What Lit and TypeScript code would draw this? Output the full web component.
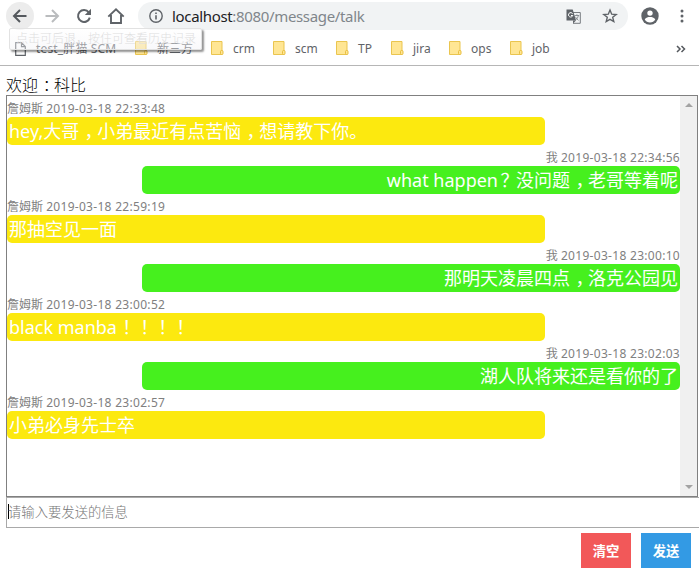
import { LitElement, html, css } from "lit";
import { customElement } from "lit/decorators.js";

interface Message {
  from: string;
  time: string;
  text: string;
  mine: boolean;
}

const messages: Message[] = [
  { from: "詹姆斯", time: "2019-03-18 22:33:48", text: "hey,大哥，小弟最近有点苦恼，想请教下你。", mine: false },
  { from: "我", time: "2019-03-18 22:34:56", text: "what happen？没问题，老哥等着呢", mine: true },
  { from: "詹姆斯", time: "2019-03-18 22:59:19", text: "那抽空见一面", mine: false },
  { from: "我", time: "2019-03-18 23:00:10", text: "那明天凌晨四点，洛克公园见", mine: true },
  { from: "詹姆斯", time: "2019-03-18 23:00:52", text: "black manba！！！！", mine: false },
  { from: "我", time: "2019-03-18 23:02:03", text: "湖人队将来还是看你的了", mine: true },
  { from: "詹姆斯", time: "2019-03-18 23:02:57", text: "小弟必身先士卒", mine: false },
];

const folders = ["新三方", "crm", "scm", "TP", "jira", "ops", "job"];

/* Full-width marks sit in the middle of their cell. */
const centred = (text: string) =>
  text.split(/([，：！？])/).map((part) => {
    if (part === "？") return html`<span class="mark ask">${part}</span>`;
    return /^[，：！]$/.test(part) ? html`<span class="mark">${part}</span>` : part;
  });

@customElement("browser-bar")
export class BrowserBar extends LitElement {
  static styles = css`
    :host {
      display: block;
      position: relative;
      height: 65px;
      background: #fff;
      border-bottom: 1px solid #b6b6b6;
      font-family: "Noto Sans", "Noto Sans CJK SC", sans-serif;
      color: #5f6368;
    }
    svg { display: block; flex: none; }
    .toolbar { display: flex; align-items: center; height: 32px; padding-left: 6px; }
    .btn { width: 28px; height: 28px; display: flex; align-items: center; justify-content: center; border-radius: 50%; margin-right: 4px; }
    .btn.on { background: #ececec; }
    .omni { display: flex; align-items: center; width: 490px; height: 28px; box-sizing: border-box; border-radius: 14px; background: #f1f3f4; padding: 0 10px; margin-left: 4px; }
    .url { flex: 1; margin-left: 8px; font-size: 15px; line-height: 28px; color: #80868b; white-space: nowrap; letter-spacing: -0.34px; }
    .url b { font-weight: 400; color: #202124; }
    .translate { margin-right: 21px; }
    .person { margin-left: 13px; }
    .dots { margin-left: 15px; }
    .marks { display: grid; grid-template-columns: 120px 76px 62px 63px 55px 58px 61px 1fr auto; align-items: center; height: 33px; padding: 0 13px 0 15px; font-size: 12px; line-height: 16px; }
    .mark { display: flex; align-items: center; white-space: nowrap; }
    .mark svg { margin-right: 9px; }
    .mark .page-icon { margin-right: 10px; }
    .wide { letter-spacing: 0.15px; }
    .tip {
      position: absolute;
      left: 9px;
      top: 28px;
      width: 193px;
      height: 22px;
      box-sizing: border-box;
      padding-left: 6px;
      border: 1px solid #e2e2e2;
      border-radius: 2px;
      background: linear-gradient(rgba(255, 255, 255, 0.5), rgba(240, 240, 245, 0.4));
      box-shadow: 2px 2px 2px rgba(0, 0, 0, 0.42);
      color: #dedede;
      font-size: 12px;
      font-weight: 300;
      line-height: 19px;
      white-space: nowrap;
    }
  `;

  folder() {
    return html`<svg width="13" height="15" viewBox="0 0 13 15">
      <path d="M.5.5h10.500v13H.5z" fill="#ffe694" stroke="#eac54f" />
      <rect x="9.500" y="9.500" width="2.500" height="4" rx="1" fill="#ffe694" stroke="#e8bd3d" />
    </svg>`;
  }

  render() {
    return html`
      <div class="toolbar">
        <div class="btn on">
          <svg width="16" height="16" viewBox="0 0 16 16"><path d="M14.5 8H2.5M8 2 2 8l6 6" fill="none" stroke="#55595e" stroke-width="2" /></svg>
        </div>
        <div class="btn">
          <svg width="16" height="16" viewBox="0 0 16 16"><path d="M1.5 8h12M8 2l6 6-6 6" fill="none" stroke="#babcbe" stroke-width="2" /></svg>
        </div>
        <div class="btn">
          <svg width="16" height="16" viewBox="0 0 16 16"><path d="M12.8 4.3A6 6 0 1 0 13.8 9.6" fill="none" stroke="#5f6368" stroke-width="2" /><path d="M15 .8V7H8.8z" fill="#5f6368" /></svg>
        </div>
        <div class="btn">
          <svg width="18" height="18" viewBox="0 0 18 18"><path d="M1.300 9.600 9 2.300l7.700 7.300M4 8v8h3.200M14 8v8h-3.200M6.500 16h5" fill="none" stroke="#5f6368" stroke-width="1.900" /></svg>
        </div>
        <div class="omni">
          <svg width="16" height="16" viewBox="0 0 16 16"><circle cx="8" cy="8" r="6.2" fill="none" stroke="#5f6368" stroke-width="1.4" /><path d="M7.2 7.2h1.6v4.2H7.2zM7.2 4.5h1.6v1.6H7.2z" fill="#5f6368" /></svg>
          <span class="url"><b>localhost</b>:8080/message/talk</span>
          <svg class="translate" width="15" height="15" viewBox="0 0 15 15">
            <path d="M6 3.5h8.3v10.8H7" fill="none" stroke="#777b80" />
            <path d="M.5.5h6.2l3.4 11H.5z" fill="#5f6368" />
            <path d="M10 11.5 7 14.5V11.5z" fill="#5f6368" />
            <path d="M6.6 4.7A2.2 2.2 0 1 0 6.8 6.5H5" fill="none" stroke="#fff" />
            <path d="M8.5 6.5h4.7M10.9 5.3v1.2M12.3 6.5c-.2 2-1.3 3.4-2.6 4.4M9.5 7.8c.6 1.4 1.6 2.7 3 3.6" fill="none" stroke="#777b80" stroke-width=".8" />
          </svg>
          <svg width="16" height="16" viewBox="0 0 16 16"><path d="m8 2 1.700 4.200 4.500.3-3.500 2.800 1.100 4.300L8 11.300l-3.800 2.300 1.100-4.300-3.500-2.800 4.500-.3z" fill="none" stroke="#5f6368" stroke-width="1.4" /></svg>
        </div>
        <svg class="person" width="18" height="18" viewBox="0 0 18 18"><circle cx="9" cy="9" r="8.7" fill="#5f6368" /><circle cx="9" cy="6.1" r="2.7" fill="#fff" /><path d="M3.7 12.6c1-2 3.5-2.6 5.3-2.6s4.3.6 5.3 2.6C13.2 14.4 11.2 15.5 9 15.5s-4.2-1.1-5.3-2.9z" fill="#fff" /></svg>
        <svg class="dots" width="16" height="16" viewBox="0 0 16 16" fill="#5f6368"><circle cx="8" cy="3" r="1.5" /><circle cx="8" cy="8" r="1.5" /><circle cx="8" cy="13" r="1.5" /></svg>
      </div>
      <div class="marks">
        <div class="mark wide">
          <svg class="page-icon" width="11" height="14" viewBox="0 0 11 14"><path d="M.7.7h5.800l3.800 3.800v8.800H.7zM6.500.7v4h4" fill="#fff" stroke="#5f6368" stroke-width="1.2" /></svg>test_胖猫 SCM
        </div>
        ${folders.map((name) => html`<div class="mark">${this.folder()}${name}</div>`)}
        <svg width="10" height="8" viewBox="0 0 10 8"><path d="m1 1 3 3-3 3M5.500 1l3 3-3 3" fill="none" stroke="#55595e" stroke-width="1.500" /></svg>
      </div>
      <div class="tip">点击可后退，按住可查看历史记录</div>
    `;
  }
}

@customElement("app-root")
export class AppRoot extends LitElement {
  static styles = css`
    :host {
      display: block;
      height: 576px;
      overflow: hidden;
      background: #fff;
      font-family: "Noto Sans", "Noto Sans CJK SC", sans-serif;
    }
    .page { padding-left: 6px; }
    .welcome { height: 29px; box-sizing: border-box; padding-top: 9px; font-size: 16px; font-weight: 300; line-height: 21px; color: #000; }
    .mark { display: inline-block; width: 1em; text-indent: 0.3em; }
    .ask { text-indent: 0.14em; }
    .log { display: flex; width: 692px; height: 402px; box-sizing: border-box; border: 1px solid #808080; }
    .list { flex: 1; padding-top: 4px; }
    .row { display: flex; flex-direction: column; align-items: flex-start; }
    .row.mine { align-items: flex-end; }
    .meta { height: 17px; line-height: 17px; font-size: 12px; color: #808080; white-space: nowrap; }
    .time { letter-spacing: 0.3px; }
    .bubble { width: 538px; height: 28px; box-sizing: border-box; margin-bottom: 4px; padding: 0 2px; border-radius: 5px; background: #fce90f; color: #fff; font-size: 18px; line-height: 29px; white-space: nowrap; }
    .mine .bubble { background: #46f01e; text-align: right; }
    .scroll { width: 17px; display: flex; flex-direction: column; justify-content: space-between; align-items: center; padding: 7px 0 7px; box-sizing: border-box; background: #f0f0f0; }
    .scroll svg { display: block; }
    .entry { display: flex; align-items: center; width: 700px; height: 31px; box-sizing: border-box; border: 1px solid #a9a9a9; padding: 0 0 2px 1px; color: #757575; font-size: 13.33px; font-weight: 300; line-height: 20px; }
    .caret { width: 1px; height: 15px; background: #000; margin-right: -1px; }
    .actions { display: flex; justify-content: flex-end; gap: 10px; padding: 5px 8px 0 0; }
    .button { width: 50px; height: 35px; line-height: 36px; text-align: center; color: #fff; font-size: 13.33px; font-weight: 700; background: #339ae4; }
    .button.clear { background: #f25859; }
  `;

  render() {
    return html`
      <browser-bar></browser-bar>
      <div class="page">
        <div class="welcome">${centred("欢迎：科比")}</div>
        <div class="log">
          <div class="list">
            ${messages.map(
              (m) => html`<div class="row ${m.mine ? "mine" : ""}">
                <div class="meta">${m.from} <span class="time">${m.time}</span></div>
                <div class="bubble">${centred(m.text)}</div>
              </div>`
            )}
          </div>
          <div class="scroll">
            <svg width="8" height="4" viewBox="0 0 8 4"><path d="M0 4 4 0l4 4z" fill="#a3a3a3" /></svg>
            <svg width="8" height="4" viewBox="0 0 8 4"><path d="m0 0 4 4 4-4z" fill="#a3a3a3" /></svg>
          </div>
        </div>
        <div class="entry"><span class="caret"></span>请输入要发送的信息</div>
        <div class="actions">
          <div class="button clear">清空</div>
          <div class="button">发送</div>
        </div>
      </div>
    `;
  }
}
